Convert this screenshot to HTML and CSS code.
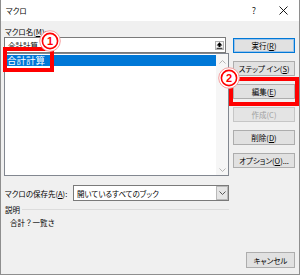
FILE: index.html
```html
<!DOCTYPE html>
<html lang="ja">

<head>
  <meta charset="UTF-8" />
  <title>マクロ</title>
  <link rel="stylesheet" href="styles.css">
</head>

<body>
  <div class="dialog">
    <div class="titlebar">
      <span class="title">マクロ</span>
      <span class="help">?</span>
      <span class="close">
        <svg width="9" height="9" viewBox="0 0 9 9"><path d="M0.5 0.5L8.5 8.5M8.5 0.5L0.5 8.5" stroke="#000" stroke-width="0.9" fill="none"/></svg>
      </span>
    </div>

    <div class="main">
      <div class="left">
        <div class="field-label">マクロ名(<u>M</u>):</div>
        <div class="namebox">
          <span class="name-text">合計計算</span>
          <span class="ref-btn">
            <svg width="7" height="7" viewBox="0 0 7 7"><path d="M3.5 0.3L0.6 3.4H2.5V5H4.5V3.4H6.4Z" fill="#000"/><path d="M0.6 6.3H6.4" stroke="#000" stroke-width="0.9"/></svg>
          </span>
        </div>
        <div class="listbox">
          <div class="items">
            <div class="item selected">合計計算</div>
          </div>
          <div class="scrollbar">
            <svg width="7" height="4" viewBox="0 0 7 4"><path d="M0.5 3.5L3.5 0.5L6.5 3.5" stroke="#b5b5b5" fill="none"/></svg>
            <svg width="7" height="4" viewBox="0 0 7 4"><path d="M0.5 0.5L3.5 3.5L6.5 0.5" stroke="#b5b5b5" fill="none"/></svg>
          </div>
        </div>
      </div>

      <div class="buttons">
        <button class="btn default">実行(<u>R</u>)</button>
        <button class="btn">ステップ イン(<u>S</u>)</button>
        <button class="btn">編集(<u>E</u>)</button>
        <button class="btn" disabled>作成(C)</button>
        <button class="btn">削除(<u>D</u>)</button>
        <button class="btn">オプション(<u>O</u>)...</button>
      </div>
    </div>

    <div class="store-row">
      <span class="store-label">マクロの保存先(<u>A</u>):</span>
      <div class="combo">
        <span class="combo-text">開いているすべてのブック</span>
        <span class="drop">
          <svg width="7" height="4" viewBox="0 0 7 4"><path d="M0.5 0.5L3.5 3.5L6.5 0.5" stroke="#555" fill="none"/></svg>
        </span>
      </div>
    </div>

    <div class="section">
      <span>説明</span>
      <span class="rule"></span>
    </div>
    <div class="desc">合計？一覧さ</div>

    <div class="footer">
      <button class="btn cancel">キャンセル</button>
    </div>

    <!-- annotations -->
    <div class="mark-box box1"></div>
    <div class="mark-box box2"></div>
    <div class="badge badge1">
      <svg width="22" height="22" viewBox="0 0 22 22"><circle cx="11" cy="11" r="10.3" fill="#fff" stroke="#f4a0a0" stroke-width="1"/><circle cx="11" cy="11" r="7.6" fill="#fff" stroke="#f00" stroke-width="1.6"/><text x="11" y="15" text-anchor="middle" font-size="11" font-weight="bold" fill="#f00">1</text></svg>
    </div>
    <div class="badge badge2">
      <svg width="22" height="22" viewBox="0 0 22 22"><circle cx="11" cy="11" r="10.3" fill="#fff" stroke="#f4a0a0" stroke-width="1"/><circle cx="11" cy="11" r="7.6" fill="#fff" stroke="#f00" stroke-width="1.6"/><text x="11" y="15" text-anchor="middle" font-size="11" font-weight="bold" fill="#f00">2</text></svg>
    </div>
  </div>
</body>

</html>
```

FILE: styles.css
```css
* {
  box-sizing: border-box;
}

body {
  margin: 0;
  background: #fff;
}

.dialog {
  position: relative;
  width: 300px;
  height: 275px;
  background: #f0f0f0;
  border: 1px solid #8e8e8e;
  border-top: none;
  font-family: "Noto Sans CJK JP", "Noto Sans", sans-serif;
  font-size: 7.5px;
  font-feature-settings: "palt";
  color: #000;
}

.titlebar {
  display: flex;
  align-items: center;
  height: 21px;
  background: #fff;
}

.title {
  flex: 1;
  padding-left: 5px;
}

.help {
  width: 20px;
  text-align: center;
  font-size: 9px;
  color: #222;
}

.close {
  display: flex;
  justify-content: center;
  width: 20px;
  margin-left: 9px;
  margin-right: 6px;
}

.main {
  display: flex;
  gap: 4px;
  padding: 0 4px 0 3px;
}

.left {
  width: 225px;
}

.field-label {
  height: 16px;
  padding: 5px 0 0 1px;
  line-height: 11px;
}

.namebox {
  display: flex;
  align-items: center;
  width: 222px;
  height: 16px;
  padding-left: 3px;
  background: #fff;
  border: 1px solid #7a7a7a;
}

.name-text {
  flex: 1;
}

.ref-btn {
  display: flex;
  align-items: center;
  justify-content: center;
  width: 9px;
  height: 9px;
  margin-right: 1px;
  background: #f4f4f4;
  border: 1px solid #b0b0b0;
}

.listbox {
  display: flex;
  height: 123px;
  background: #fff;
  border: 1px solid #828790;
}

.items {
  flex: 1;
  padding-top: 1px;
}

.item {
  height: 11px;
  padding-left: 2px;
  font-size: 9.5px;
  line-height: 11px;
}

.item.selected {
  background: #0078d7;
  color: #fff;
}

.scrollbar {
  display: flex;
  flex-direction: column;
  justify-content: space-between;
  align-items: center;
  width: 12px;
  padding: 6px 0 3px;
  background: #f6f6f6;
}

.buttons {
  display: flex;
  flex-direction: column;
  gap: 8px;
  width: 62px;
  padding-top: 17px;
}

.btn {
  height: 15px;
  padding: 0;
  background: #e1e1e1;
  border: 1px solid #adadad;
  font: inherit;
  font-feature-settings: inherit;
  color: #000;
}

.btn.default {
  border-color: #0078d7;
  box-shadow: inset 0 0 0 1px #9cc3e8;
}

.btn:disabled {
  background: #e4e4e4;
  border-color: #c6c6c6;
  color: #a0a0a0;
}

.store-row {
  display: flex;
  align-items: center;
  height: 16px;
  margin-top: 9px;
  padding-left: 4px;
}

.store-label {
  width: 68px;
}

.combo {
  display: flex;
  align-items: center;
  width: 156px;
  height: 16px;
  padding-left: 3px;
  background: #fff;
  border: 1px solid #7a7a7a;
}

.combo-text {
  flex: 1;
}

.drop {
  display: flex;
  align-items: center;
  justify-content: center;
  width: 12px;
  height: 14px;
  background: #e5e5e5;
  border: 1px solid #b9b9b9;
}

.section {
  display: flex;
  align-items: center;
  height: 14px;
  margin-top: 1px;
  padding: 0 70px 0 4px;
}

.rule {
  flex: 1;
  height: 1px;
  margin-left: 2px;
  background: #dcdcdc;
}

.desc {
  height: 14px;
  padding-left: 9px;
  line-height: 14px;
  font-feature-settings: normal;
}

.footer {
  display: flex;
  justify-content: flex-end;
  margin-top: 22px;
  padding-right: 4px;
}

.btn.cancel {
  width: 49px;
  height: 16px;
}

.mark-box {
  position: absolute;
  border: 4px solid #f00;
}

.box1 {
  left: 2px;
  top: 47px;
  width: 51px;
  height: 25px;
}

.box2 {
  left: 228px;
  top: 77px;
  width: 70px;
  height: 29px;
}

.badge {
  position: absolute;
  width: 22px;
  height: 22px;
  font-family: "Liberation Sans", sans-serif;
}

.badge svg {
  display: block;
}

.badge1 {
  left: 38px;
  top: 30px;
}

.badge2 {
  left: 217px;
  top: 67px;
}
```
